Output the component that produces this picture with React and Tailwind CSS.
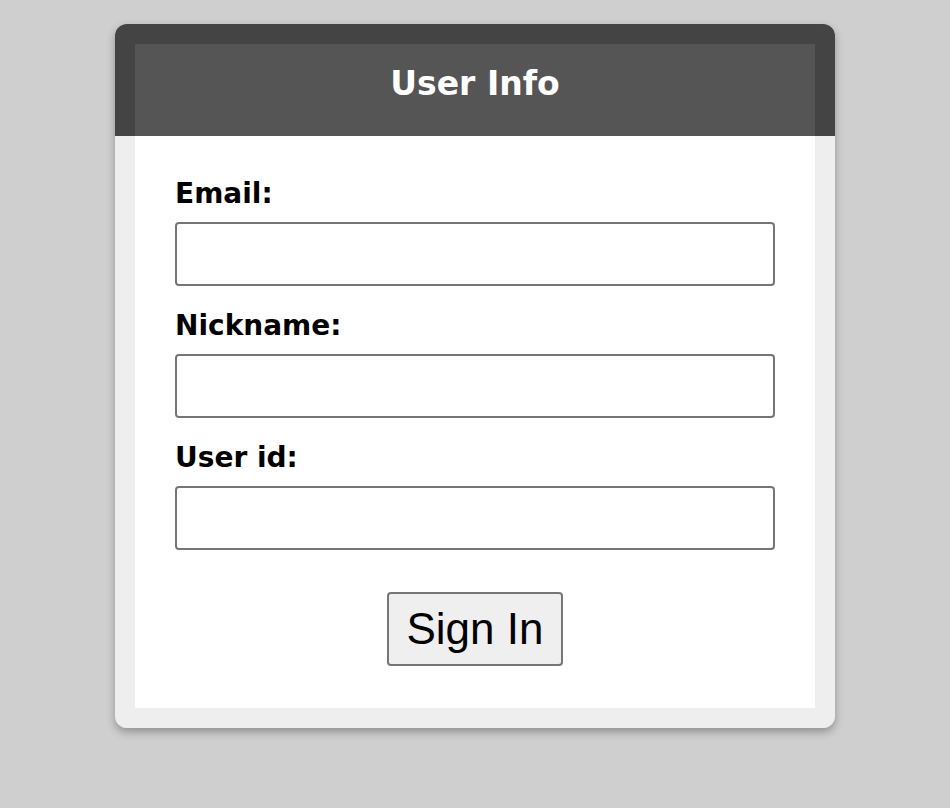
import { useState } from 'react'

const fields = [
  { key: 'email', label: 'Email:', type: 'email' },
  { key: 'nickname', label: 'Nickname:', type: 'text' },
  { key: 'userId', label: 'User id:', type: 'text' },
]

const App = () => {
  const [form, setForm] = useState({ email: '', nickname: '', userId: '' })

  const update = (key, value) => setForm({ ...form, [key]: value })

  return (
    <div className="min-h-screen bg-[#cfcfcf] pt-6" style={{ fontFamily: '"DejaVu Sans", sans-serif' }}>
      <div className="w-[720px] mx-auto rounded-xl overflow-hidden shadow-[0_4px_8px_rgba(0,0,0,0.3)]">
        <div className="bg-[#444444] px-5 pt-5">
          <h1 className="bg-[#555555] h-[92px] pt-[20px] text-center text-white font-bold text-[33px] leading-[40px]">
            User Info
          </h1>
        </div>
        <div className="bg-[#eeeeee] px-5 pb-5">
          <form
            className="bg-white px-10 pt-[42px] pb-[42px]"
            onSubmit={(e) => e.preventDefault()}
          >
            {fields.map((f) => (
              <div key={f.key} className="mb-6">
                <label
                  htmlFor={f.key}
                  className="block text-black font-bold text-[28px] leading-[32px] mb-3"
                >
                  {f.label}
                </label>
                <input
                  id={f.key}
                  type={f.type}
                  value={form[f.key]}
                  onChange={(e) => update(f.key, e.target.value)}
                  className="block w-full h-16 border-2 border-[#767676] rounded-[4px] bg-white px-2 text-2xl outline-none"
                />
              </div>
            ))}
            <div className="flex justify-center pt-[18px]">
              <button
                type="submit"
                className="bg-[#efefef] border-2 border-[#767676] rounded-[4px] px-[18px] py-[10px] text-[44px] leading-[50px] text-black"
                style={{ fontFamily: '"Liberation Sans", Arial, sans-serif' }}
              >
                Sign In
              </button>
            </div>
          </form>
        </div>
      </div>
    </div>
  )
}

export default App
